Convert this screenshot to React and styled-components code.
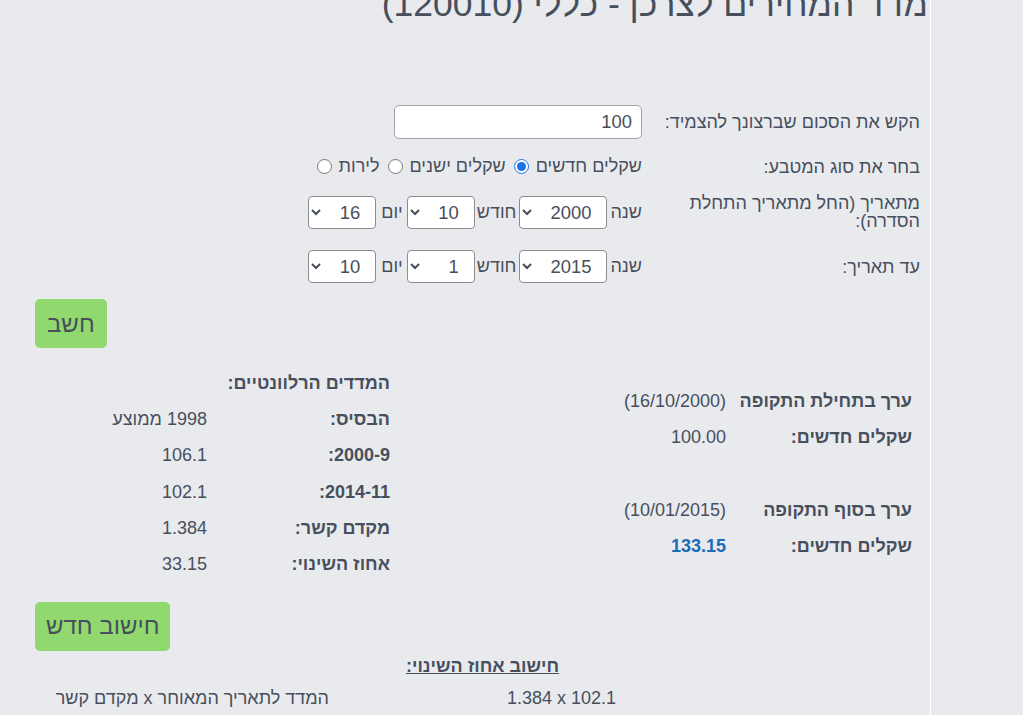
import React from "react";
import styled, { createGlobalStyle } from "styled-components";

const Global = createGlobalStyle`
  html, body { margin: 0; padding: 0; background: #e9eaee; }
  body { font-family: "Liberation Sans", Arial, sans-serif; color: #474f5d; }
`;

const Page = styled.div`
  display: flex;
  direction: ltr;
  min-height: 715px;
  overflow: hidden;
`;

const Main = styled.main`
  direction: rtl;
  width: 931px;
  box-sizing: border-box;
  padding: 0 10px 0 35px;
  border-right: 1px solid #ffffff;
  font-size: 18px;
`;

const Side = styled.div`
  flex: 1;
`;

const Title = styled.h1`
  margin: -16px -8px 0 0;
  font-size: 35.5px;
  font-weight: normal;
  line-height: 41px;
  white-space: nowrap;
`;

const Form = styled.div`
  margin-top: 80px;
  display: flex;
  flex-direction: column;
`;

const FormRow = styled.div`
  display: grid;
  grid-template-columns: 262px auto;
  column-gap: 16px;
  align-items: center;
  min-height: ${(p) => p.$h}px;
  margin-top: ${(p) => p.$gap || 0}px;
`;

const Label = styled.div`
  line-height: 18px;
`;

const Controls = styled.div`
  display: flex;
  align-items: center;
  justify-content: flex-start;
`;

const AmountInput = styled.input`
  width: 248px;
  height: 34px;
  box-sizing: border-box;
  border: 1px solid #a3a3a3;
  border-radius: 5px;
  background: #fff;
  font-family: inherit;
  font-size: 18.4px;
  color: #474f5d;
  text-align: right;
  padding: 0 9px;
  direction: rtl;
`;

const RadioText = styled.span`
  margin-left: ${(p) => p.$gap}px;
`;

const Radio = styled.input`
  width: 15px;
  height: 15px;
  margin: 0 0 0 ${(p) => p.$gap}px;
  accent-color: #1a73e8;
`;

const SelText = styled.span`
  margin-left: ${(p) => p.$gap}px;
`;

const Select = styled.select`
  width: ${(p) => p.$w}px;
  height: 33px;
  box-sizing: border-box;
  border: 1px solid #8d8d8d;
  border-radius: 4px;
  background: #fff;
  color: #474f5d;
  font-family: inherit;
  font-size: 18.4px;
  padding: 0 11px 0 4px;
  margin-left: ${(p) => p.$gap}px;
  direction: rtl;
`;

const ButtonBar = styled.div`
  display: flex;
  justify-content: flex-end;
  margin-top: ${(p) => p.$top}px;
`;

const GreenButton = styled.button`
  background: #91d86e;
  border: none;
  border-radius: 5px;
  height: 49px;
  padding: 0 ${(p) => p.$pad}px;
  font-family: inherit;
  font-size: 24px;
  color: #474f5d;
  cursor: pointer;
`;

const Results = styled.div`
  display: grid;
  grid-template-columns: 530px 356px;
  align-items: center;
  margin-top: 17px;
`;

const Table = styled.div`
  display: grid;
  grid-template-columns: ${(p) => p.$label}px auto;
  grid-auto-rows: 36.3px;
  align-items: center;
  padding-right: ${(p) => p.$pr}px;
`;

const Cell = styled.div`
  font-weight: ${(p) => (p.$bold ? "bold" : "normal")};
  color: ${(p) => (p.$blue ? "#1e6bb5" : "inherit")};
  white-space: nowrap;
  text-align: right;
`;

const FullCell = styled(Cell)`
  grid-column: 1 / -1;
`;

const Formula = styled(Cell)`
  direction: ltr;
`;

const Calc = styled.div`
  margin-top: 2px;
`;

const CalcTitle = styled.div`
  text-align: center;
  font-weight: bold;
  text-decoration: underline;
  padding-left: 10px;
  line-height: 26px;
`;

const CalcRow = styled.div`
  display: grid;
  grid-template-columns: 287px auto;
  margin-right: 304px;
  line-height: 38px;
`;

const starts = { y: 2000, m: 10, d: 16 };
const ends = { y: 2015, m: 1, d: 10 };

function DatePick({ v }) {
  return (
    <Controls>
      <SelText $gap={3}>שנה</SelText>
      <Select $w={88} $gap={3} defaultValue={v.y}>
        {[1998, 1999, 2000, 2001, 2014, 2015].map((y) => (
          <option key={y}>{y}</option>
        ))}
      </Select>
      <SelText $gap={2}>חודש</SelText>
      <Select $w={68} $gap={4} defaultValue={v.m}>
        {Array.from({ length: 12 }, (_, i) => i + 1).map((m) => (
          <option key={m}>{m}</option>
        ))}
      </Select>
      <SelText $gap={5}>יום</SelText>
      <Select $w={68} $gap={0} defaultValue={v.d}>
        {Array.from({ length: 31 }, (_, i) => i + 1).map((d) => (
          <option key={d}>{d}</option>
        ))}
      </Select>
    </Controls>
  );
}

export default function App() {
  return (
    <>
      <Global />
      <Page>
        <Main>
          <Title>מדד המחירים לצרכן - כללי (120010)</Title>
          <Form>
            <FormRow $h={34}>
              <Label>הקש את הסכום שברצונך להצמיד:</Label>
              <Controls>
                <AmountInput defaultValue="100" />
              </Controls>
            </FormRow>
            <FormRow $h={33} $gap={11}>
              <Label>בחר את סוג המטבע:</Label>
              <Controls>
                <RadioText $gap={7}>שקלים חדשים</RadioText>
                <Radio type="radio" name="cur" defaultChecked $gap={8} />
                <RadioText $gap={7}>שקלים ישנים</RadioText>
                <Radio type="radio" name="cur" $gap={8} />
                <RadioText $gap={7}>לירות</RadioText>
                <Radio type="radio" name="cur" $gap={0} />
              </Controls>
            </FormRow>
            <FormRow $h={33} $gap={11}>
              <Label>מתאריך (החל מתאריך התחלת הסדרה):</Label>
              <DatePick v={starts} />
            </FormRow>
            <FormRow $h={33} $gap={20}>
              <Label>עד תאריך:</Label>
              <DatePick v={ends} />
            </FormRow>
          </Form>

          <ButtonBar $top={16}>
            <GreenButton $pad={12}>חשב</GreenButton>
          </ButtonBar>

          <Results>
            <Table $label={186} $pr={8}>
              <Cell $bold>ערך בתחילת התקופה</Cell>
              <Cell>(16/10/2000)</Cell>
              <Cell $bold>שקלים חדשים:</Cell>
              <Cell>100.00</Cell>
              <FullCell />
              <Cell $bold>ערך בסוף התקופה</Cell>
              <Cell>(10/01/2015)</Cell>
              <Cell $bold>שקלים חדשים:</Cell>
              <Cell $bold $blue>133.15</Cell>
            </Table>
            <Table $label={183} $pr={0}>
              <FullCell $bold>המדדים הרלוונטיים:</FullCell>
              <Cell $bold>הבסיס:</Cell>
              <Cell>1998 ממוצע</Cell>
              <Cell $bold>2000-9:</Cell>
              <Cell>106.1</Cell>
              <Cell $bold>2014-11:</Cell>
              <Cell>102.1</Cell>
              <Cell $bold>מקדם קשר:</Cell>
              <Cell>1.384</Cell>
              <Cell $bold>אחוז השינוי:</Cell>
              <Cell>33.15</Cell>
            </Table>
          </Results>

          <ButtonBar $top={19}>
            <GreenButton $pad={11}>חישוב חדש</GreenButton>
          </ButtonBar>

          <Calc>
            <CalcTitle>חישוב אחוז השינוי:</CalcTitle>
            <CalcRow>
              <Formula>1.384 x 102.1</Formula>
              <Cell>המדד לתאריך המאוחר x מקדם קשר</Cell>
            </CalcRow>
          </Calc>
        </Main>
        <Side />
      </Page>
    </>
  );
}
